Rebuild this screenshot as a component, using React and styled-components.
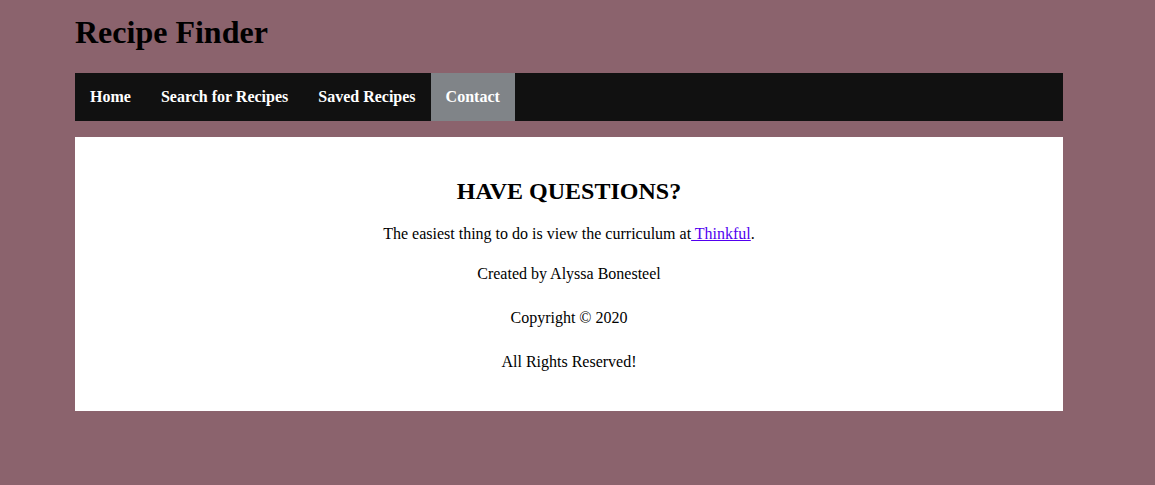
import React from 'react';
import styled, { createGlobalStyle } from 'styled-components';

const GlobalStyle = createGlobalStyle`
  html,
  body {
    background-color: #8b636d;
  }

  body {
    margin: 8px;
    font-family: 'Liberation Serif', 'Times New Roman', serif;
    color: #000;
  }
`;

const Page = styled.div`
  width: 988px;
  margin-left: 67px;
`;

const Title = styled.h1`
  font-size: 32px;
  font-weight: bold;
  margin: 0;
  padding: 6px 0 22px;
`;

const NavBar = styled.nav`
  background-color: #111;
  display: flex;
`;

const NavItem = styled.a`
  color: #fff;
  font-weight: bold;
  font-size: 16px;
  padding: 15px;
  text-decoration: none;
  cursor: pointer;
  background-color: ${({ $active }) => ($active ? '#808488' : 'transparent')};
`;

const Card = styled.main`
  background-color: #fff;
  margin-top: 16px;
  padding: 41px 0 40px;
  text-align: center;
`;

const Heading = styled.h2`
  font-size: 24px;
  margin: 0 0 20px;
`;

const Text = styled.p`
  font-size: 16px;
  margin: 0 0 ${({ $gap }) => $gap}px;
`;

const Link = styled.a`
  color: #5200f0;
`;

const links = ['Home', 'Search for Recipes', 'Saved Recipes', 'Contact'];

export default function App() {
  return (
    <Page>
      <GlobalStyle />
      <Title>Recipe Finder</Title>
      <NavBar>
        {links.map((label) => (
          <NavItem key={label} $active={label === 'Contact'}>
            {label}
          </NavItem>
        ))}
      </NavBar>
      <Card>
        <Heading>HAVE QUESTIONS?</Heading>
        <Text $gap={22}>
          The easiest thing to do is view the curriculum at
          <Link href="#"> Thinkful</Link>.
        </Text>
        <Text $gap={26}>Created by Alyssa Bonesteel</Text>
        <Text $gap={26}>Copyright © 2020</Text>
        <Text $gap={0}>All Rights Reserved!</Text>
      </Card>
    </Page>
  );
}
